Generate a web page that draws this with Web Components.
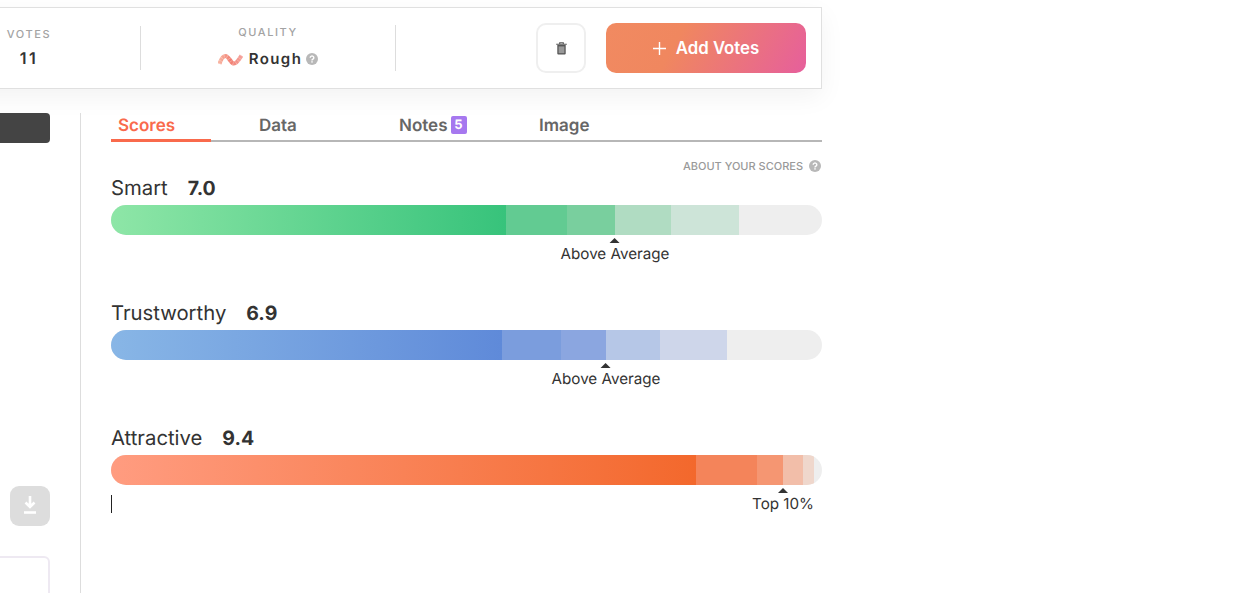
<!DOCTYPE html>
<html lang="en">
<head>
<meta charset="utf-8">
<title>Scores</title>
<style>
  html, body { margin: 0; height: 100%; background: #fff; overflow: hidden; }
  body { font-family: Inter, "Liberation Sans", sans-serif; color: #333; text-rendering: geometricPrecision; }
</style>
</head>
<body>
<score-page>
  <stat-bar>
    <stat-cell slot="stats" label="Votes" width="223" size="16" spacing="2.4"><span>11</span></stat-cell>
    <stat-cell slot="stats" label="Quality" width="255" tall><quality-tag>Rough</quality-tag></stat-cell>
  </stat-bar>
  <side-rail slot="side"></side-rail>
  <tab-strip slot="main"></tab-strip>
  <about-link slot="main">About your scores</about-link>
  <score-row slot="main" name="Smart" value="7.0" label="Above Average" marker="504"
    stops="395,456,504,560,628" from="#8ee6a7" to="#37c37b"
    colors="#62cb92,#79cf9e,#b0dcc2,#cde4d8"></score-row>
  <score-row slot="main" name="Trustworthy" value="6.9" label="Above Average" marker="495"
    stops="391,450,495,549,616" from="#88b6e6" to="#5f8ad9"
    colors="#7b9ddd,#8ba6e0,#b6c7e7,#ced6ea"></score-row>
  <score-row slot="main" name="Attractive" value="9.4" label="Top 10%" marker="672"
    stops="585,646,672,692,703" from="#ff9c80" to="#f3682c"
    colors="#f4845a,#f59672,#f2bea9,#efd7cc" caret></score-row>
</score-page>

<script>
// Help circle used next to the quality tag and the about link
const helpIcon = (size, color) => `
  <svg width="${size}" height="${size}" viewBox="0 0 12 12" aria-hidden="true">
    <circle cx="6" cy="6" r="6" fill="${color}"/>
    <path d="M4.2 4.7a1.8 1.7 0 1 1 2.7 1.5c-.6.4-.9.6-.9 1.2" fill="none" stroke="#fff" stroke-width="1.4"/>
    <rect x="5.3" y="8.2" width="1.4" height="1.4" fill="#fff"/>
  </svg>`;

class ScorePage extends HTMLElement {
  constructor() {
    super();
    this.attachShadow({ mode: 'open' });
    this.shadowRoot.innerHTML = `
      <style>
        :host { display: block; height: 593px; overflow: hidden; padding-top: 7px; box-sizing: border-box; }
        .body { display: flex; margin-top: 24px; height: 480px; }
        .main { width: 711px; margin-left: 30px; display: flex; flex-direction: column; }
      </style>
      <slot></slot>
      <div class="body">
        <slot name="side"></slot>
        <div class="main"><slot name="main"></slot></div>
      </div>`;
  }
}

class StatBar extends HTMLElement {
  constructor() {
    super();
    this.attachShadow({ mode: 'open' });
    this.shadowRoot.innerHTML = `
      <style>
        :host {
          display: flex; align-items: center; box-sizing: border-box;
          width: 904px; height: 82px; margin-left: -82px;
          background: #fff; border: 1px solid #e0e0e0; border-left: 0;
          box-shadow: 0 8px 24px rgba(0, 0, 0, .05);
          padding-right: 15px;
        }
        .actions { margin-left: auto; display: flex; gap: 20px; }
        button { font: inherit; box-sizing: border-box; height: 50px; cursor: pointer; display: flex; align-items: center; justify-content: center; }
        .trash { width: 50px; background: #fff; border: 2px solid #efefef; border-radius: 10px; }
        .add {
          width: 200px; border: 0; border-radius: 10px; gap: 10px;
          background: linear-gradient(118deg, #f18a61 0%, #f0875f 35%, #e65f9c 100%);
          color: #fff; font-size: 16.800px; font-weight: 600;
        }
      </style>
      <slot name="stats"></slot>
      <div class="actions">
        <button class="trash" aria-label="Delete">
          <svg width="11" height="13" viewBox="0 0 11 13">
            <path d="M.2 2.3h10.6M3.7 2V.8h3.6V2" fill="none" stroke="#555" stroke-width="1.1"/>
            <path d="M1.3 3h8.4v8.6a1 1 0 0 1-1 1H2.3a1 1 0 0 1-1-1z" fill="#555"/>
            <rect x="2.6" y="4.4" width="5.8" height="6.8" fill="#999"/>
          </svg>
        </button>
        <button class="add">
          <svg width="13" height="13" viewBox="0 0 13 13"><path d="M6.5 0v13M0 6.5h13" stroke="#fff" stroke-width="1.4"/></svg>
          <span>Add Votes</span>
        </button>
      </div>`;
  }
}

class StatCell extends HTMLElement {
  constructor() {
    super();
    const width = this.getAttribute('width');
    const tall = this.hasAttribute('tall');
    this.attachShadow({ mode: 'open' });
    this.shadowRoot.innerHTML = `
      <style>
        :host {
          display: flex; flex-direction: column; align-items: center; box-sizing: border-box;
          width: ${width}px; height: ${tall ? 46 : 44}px;
          border-right: 1px solid #ddd;
          padding-top: ${tall ? 0 : 1}px;
        }
        .label { font-size: 11px; font-weight: 500; letter-spacing: 1.6px; color: #a3a3a3; text-transform: uppercase; line-height: 14px; }
        .value { margin-top: ${tall ? 9 : 6}px; font-size: ${this.getAttribute('size') || 15}px; font-weight: 600; line-height: 22px; color: #333; letter-spacing: ${this.getAttribute('spacing') || 1.4}px; }
      </style>
      <div class="label">${this.getAttribute('label')}</div>
      <div class="value"><slot></slot></div>`;
  }
}

class QualityTag extends HTMLElement {
  constructor() {
    super();
    this.attachShadow({ mode: 'open' });
    this.shadowRoot.innerHTML = `
      <style>
        :host { display: flex; align-items: center; }
        svg.wave { margin-right: 6px; }
        .help { margin-left: 4px; display: flex; }
      </style>
      <svg class="wave" width="25" height="13" viewBox="0 0 25 13">
        <defs>
          <linearGradient id="w" x1="0" x2="1"><stop offset="0" stop-color="#f8b3a0"/><stop offset=".5" stop-color="#f27f72"/><stop offset="1" stop-color="#f5a19a"/></linearGradient>
        </defs>
        <path d="M1.500 11C3 6 5 3 7.500 3c3.500 0 5 7.500 8.500 7.500c3 0 5-4 7.500-8" fill="none" stroke="url(#w)" stroke-width="4.200"/>
        <path d="M1.500 11C3 6 5 3 7.500 3c3.500 0 5 7.500 8.500 7.500c3 0 5-4 7.500-8" fill="none" stroke="#fff" stroke-opacity=".35" stroke-width="4.200" stroke-dasharray=".7 2.300"/>
      </svg>
      <slot></slot>
      <span class="help">${helpIcon(12, '#b8b8b8')}</span>`;
  }
}

class SideRail extends HTMLElement {
  constructor() {
    super();
    this.attachShadow({ mode: 'open' });
    this.shadowRoot.innerHTML = `
      <style>
        :host {
          display: flex; flex-direction: column; align-items: flex-end; box-sizing: border-box;
          width: 81px; height: 100%; padding-right: 30px;
          border-right: 1px solid #ddd;
        }
        .dark { flex: none; width: 60px; height: 30px; background: #444; border-radius: 0 4px 4px 0; }
        .download {
          flex: none; width: 40px; height: 40px; margin-top: 343px; border-radius: 9px; background: #ddd;
          display: flex; align-items: center; justify-content: center;
        }
        .download svg { margin-bottom: 2px; }
        .box { flex: none; width: 60px; height: 60px; margin-top: 30px; box-sizing: border-box; background: #fff; border: 2px solid #eee9f2; border-left: 0; border-radius: 0 6px 0 0; }
      </style>
      <div class="dark"></div>
      <div class="download">
        <svg width="14" height="18" viewBox="0 0 14 18">
          <path d="M7 0v11M2.500 6.500l4.500 4.500 4.500-4.500" fill="none" stroke="#fff" stroke-width="2.600"/>
          <path d="M1 16.500h12" stroke="#fff" stroke-width="2.600"/>
        </svg>
      </div>
      <div class="box"></div>`;
  }
}

class TabStrip extends HTMLElement {
  constructor() {
    super();
    this.attachShadow({ mode: 'open' });
    this.shadowRoot.innerHTML = `
      <style>
        :host {
          display: flex; box-sizing: border-box; height: 29px;
          border-bottom: 2px solid #b7b7b7;
          font-size: 17px; font-weight: 600; color: #666; line-height: 26px;
        }
        .tab { width: 140px; box-sizing: border-box; padding-left: 8px; display: flex; align-items: flex-start; gap: 3px; cursor: pointer; }
        .tab.active { padding-left: 7px; position: relative; color: #f96a4c; }
        .tab.active::after {
          content: ""; position: absolute; left: 0; bottom: -2px; width: 100px; height: 3px; background: #f96a4c;
        }
        .badge {
          width: 16px; height: 18px; margin-top: 3px; border-radius: 2px; background: #a678ef; color: #fff;
          font-size: 13px; line-height: 18px; text-align: center; font-weight: 700;
        }
      </style>
      <div class="tab active">Scores</div>
      <div class="tab">Data</div>
      <div class="tab">Notes<span class="badge">5</span></div>
      <div class="tab">Image</div>`;
  }
}

class AboutLink extends HTMLElement {
  constructor() {
    super();
    this.attachShadow({ mode: 'open' });
    this.shadowRoot.innerHTML = `
      <style>
        :host {
          display: flex; justify-content: flex-end; align-items: center; gap: 6px;
          height: 16px; margin-top: 16px; margin-bottom: 2px; padding-right: 1px;
          font-size: 11px; font-weight: 500; color: #999; text-transform: uppercase;
        }
      </style>
      <slot></slot>${helpIcon(12, '#b8b8b8')}`;
  }
}

class ScoreRow extends HTMLElement {
  constructor() {
    super();
    const stops = this.getAttribute('stops').split(',').map(Number);
    const colors = this.getAttribute('colors').split(',');
    const marker = Number(this.getAttribute('marker'));
    // First stop carries the gradient, the rest are flat bands, the remainder is the track
    const bands = colors.map((c, i) =>
      `<div style="width:${stops[i + 1] - stops[i]}px;background:${c}"></div>`).join('');
    this.attachShadow({ mode: 'open' });
    this.shadowRoot.innerHTML = `
      <style>
        :host { display: block; height: 125px; }
        .head { display: flex; gap: 20px; height: 24px; line-height: 24px; font-size: 20.300px; color: #333; }
        .head b { font-weight: 700; font-size: 19.500px; }
        .bar { display: flex; height: 30px; margin-top: 5px; border-radius: 15px; overflow: hidden; background: #eee; }
        .bar > div { flex: none; }
        .fill { width: ${stops[0]}px; background: linear-gradient(90deg, ${this.getAttribute('from')}, ${this.getAttribute('to')}); }
        .below { position: relative; height: 28px; }
        .marker { position: absolute; left: ${marker}px; top: 3px; transform: translateX(-50%); display: flex; flex-direction: column; align-items: center; white-space: nowrap; font-size: 15.200px; color: #333; line-height: 18px; }
        .tri { width: 0; height: 0; border: 5px solid transparent; border-top: 0; border-bottom: 5px solid #333; margin-bottom: 2px; }
        .caret { position: absolute; left: 0; top: 10px; width: 1px; height: 18px; background: #222; }
      </style>
      <div class="head"><span>${this.getAttribute('name')}</span><b>${this.getAttribute('value')}</b></div>
      <div class="bar"><div class="fill"></div>${bands}</div>
      <div class="below">
        ${this.hasAttribute('caret') ? '<div class="caret"></div>' : ''}
        <div class="marker"><div class="tri"></div>${this.getAttribute('label')}</div>
      </div>`;
  }
}

customElements.define('score-page', ScorePage);
customElements.define('stat-bar', StatBar);
customElements.define('stat-cell', StatCell);
customElements.define('quality-tag', QualityTag);
customElements.define('side-rail', SideRail);
customElements.define('tab-strip', TabStrip);
customElements.define('about-link', AboutLink);
customElements.define('score-row', ScoreRow);
</script>
</body>
</html>
